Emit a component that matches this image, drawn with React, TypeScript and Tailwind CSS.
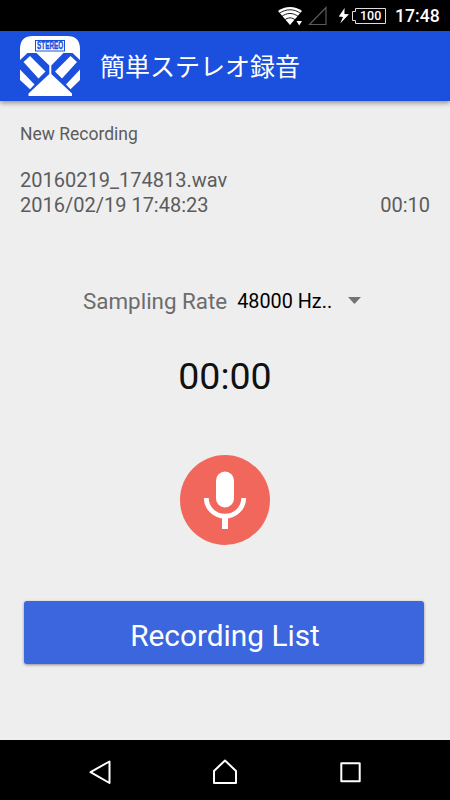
function StatusBar() {
  return (
    <div className="flex h-[31px] shrink-0 items-center bg-black pr-[11px] pl-[278px] text-white">
      <svg width="26" height="22" viewBox="0 0 26 22" className="shrink-0">
        <path d="M0 6C7 .8 17 .8 24 6L12 20Z" fill="#fff" />
        <g fill="none" stroke="#000" strokeWidth="0.9">
          <path d="M1 8.6C8 3.5 16 3.5 23 8.6" />
          <path d="M3 12C9 7.3 15 7.3 21 12" />
          <path d="M6 15.5C10 12 14 12 18 15.5" />
        </g>
        <path d="M16.5 14.5H25V22H16.5Z" fill="#000" />
        <path d="M18.5 16H24L21.2 20.5Z" fill="#fff" />
      </svg>
      <svg width="20" height="20" viewBox="0 0 20 20" className="ml-[4px] shrink-0">
        <path d="M18 1.5V18.5H1.5Z" fill="none" stroke="#5a5a5a" strokeWidth="1.2" />
      </svg>
      <svg width="12" height="16" viewBox="0 0 12 16" className="ml-[10px] shrink-0">
        <path d="M6.6 0L.8 8.6L5 9L2.2 15.5L11 6.2L6.4 6Z" fill="#fff" />
      </svg>
      <div className="relative ml-[2px] h-[18px] w-[34px] shrink-0">
        <svg width="34" height="18" viewBox="0 0 34 18">
          <path d="M3.5 1.5H33.5V16.5H3.5V13.5H.5V4.5H3.5Z" fill="none" stroke="#ddd" />
        </svg>
        <span className="absolute top-0 left-[8px] text-[12.5px] leading-[18px] font-medium">100</span>
      </div>
      <span className="ml-[9px] pt-px text-[17.6px] font-medium whitespace-nowrap">17:48</span>
    </div>
  );
}

function Logo() {
  return (
    <svg width="60" height="60" viewBox="0 0 60 60" className="shrink-0 overflow-visible">
      <path
        d="M0 24V13Q0 0 13 0H47Q60 0 60 13V24L52.5 17H43.5L31.3 29.5V38L52 57.5V60H8.5V57.5L29.3 38V29.5L16.5 17H7.5Z"
        fill="#fff"
      />
      <g fill="#fff">
        <path d="M3.5 26L10 20L25.5 35.5L18.5 42.5Z" />
        <path d="M0 33.5L14.5 48.5L10 53.3L0 44Z" />
        <path d="M57 26L50.5 20L35 35.5L42 42.5Z" />
        <path d="M60 33.5L46 48.5L50.5 53.3L60 44Z" />
      </g>
      <rect x="15.5" y="4.5" width="29" height="10.5" fill="none" stroke="#1a50dd" />
      <g transform="translate(17 13.4) scale(0.61 1)">
        <text
          fill="#1a50dd"
          stroke="#1a50dd"
          strokeWidth="0.4"
          fontSize="10.5"
          fontWeight="700"
          fontFamily="Liberation Sans, sans-serif"
        >
          STEREO
        </text>
      </g>
    </svg>
  );
}

function RecordButton() {
  return (
    <button className="mt-[57px] size-[90px] self-center" aria-label="Record">
      <svg width="90" height="90" viewBox="0 0 90 90">
        <circle cx="45" cy="45" r="45" fill="#f2675c" />
        <rect x="36" y="16.5" width="18" height="36" rx="9" fill="#fff" />
        <path d="M26.3 43A18.7 18.2 0 0 0 63.7 43" fill="none" stroke="#fff" strokeWidth="4.8" />
        <path d="M45 60V74" stroke="#fff" strokeWidth="6" />
      </svg>
    </button>
  );
}

function NavBar() {
  return (
    <nav className="h-[60px] shrink-0 bg-black">
      <div className="flex h-full items-center justify-between px-[87px] pt-[4px]">
        <svg width="26" height="26" viewBox="0 0 26 26" fill="none" stroke="#fff" strokeWidth="2" strokeLinejoin="round">
          <path d="M22.5 2.5V24L3.5 13.2Z" />
        </svg>
        <svg width="26" height="26" viewBox="0 0 26 26" fill="none" stroke="#fff" strokeWidth="2" strokeLinejoin="round">
          <path d="M13 1.5L24 12V24H2V12Z" />
        </svg>
        <svg width="26" height="26" viewBox="0 0 26 26" fill="none" stroke="#fff" strokeWidth="2" strokeLinejoin="round">
          <path d="M4.3 4.3H22.7V22.3H4.3Z" />
        </svg>
      </div>
    </nav>
  );
}

export default function App() {
  return (
    <div className="flex h-[800px] w-[450px] flex-col overflow-hidden bg-[#eeeeee] font-['Roboto','Noto_Sans_CJK_JP',sans-serif]">
      <StatusBar />
      <header className="z-10 flex h-[70px] shrink-0 items-center gap-[20px] bg-[#1a50dd] pl-[20px] shadow-[0_2px_5px_rgba(0,0,0,0.4)]">
        <Logo />
        <h1 className="pt-[4px] text-[25px] leading-[36px] text-white">簡単ステレオ録音</h1>
      </header>

      <main className="flex flex-1 flex-col text-[#5c5c5c]">
        <section className="px-[20px] pt-[22px]">
          <h2 className="text-[17.5px] leading-[22px]">New Recording</h2>
          <p className="mt-[23px] text-[20px] leading-[25px]">20160219_174813.wav</p>
          <div className="flex justify-between text-[20px] leading-[25px]">
            <span>2016/02/19 17:48:23</span>
            <span>00:10</span>
          </div>
        </section>

        <div className="mt-[69px] flex h-[30px] items-center pl-[83px]">
          <span className="text-[22.4px] text-[#6c6c6c]">Sampling Rate</span>
          <span className="ml-[10px] text-[19.8px] text-black">48000 Hz..</span>
          <svg width="13" height="7" viewBox="0 0 13 7" className="mb-[4px] ml-[16px]">
            <path d="M0 0H13L6.5 7Z" fill="#737373" />
          </svg>
        </div>

        <p className="mt-[37px] text-center text-[37.5px] leading-[44px] text-[#111]">00:00</p>

        <RecordButton />

        <button className="mt-[56px] mr-[26px] ml-[24px] h-[63px] rounded-[3px] bg-[#3b66dd] pt-[8px] pl-[2px] text-[29.8px] text-white shadow-[0_1px_3px_rgba(0,0,0,0.4)]">
          Recording List
        </button>
      </main>

      <NavBar />
    </div>
  );
}
